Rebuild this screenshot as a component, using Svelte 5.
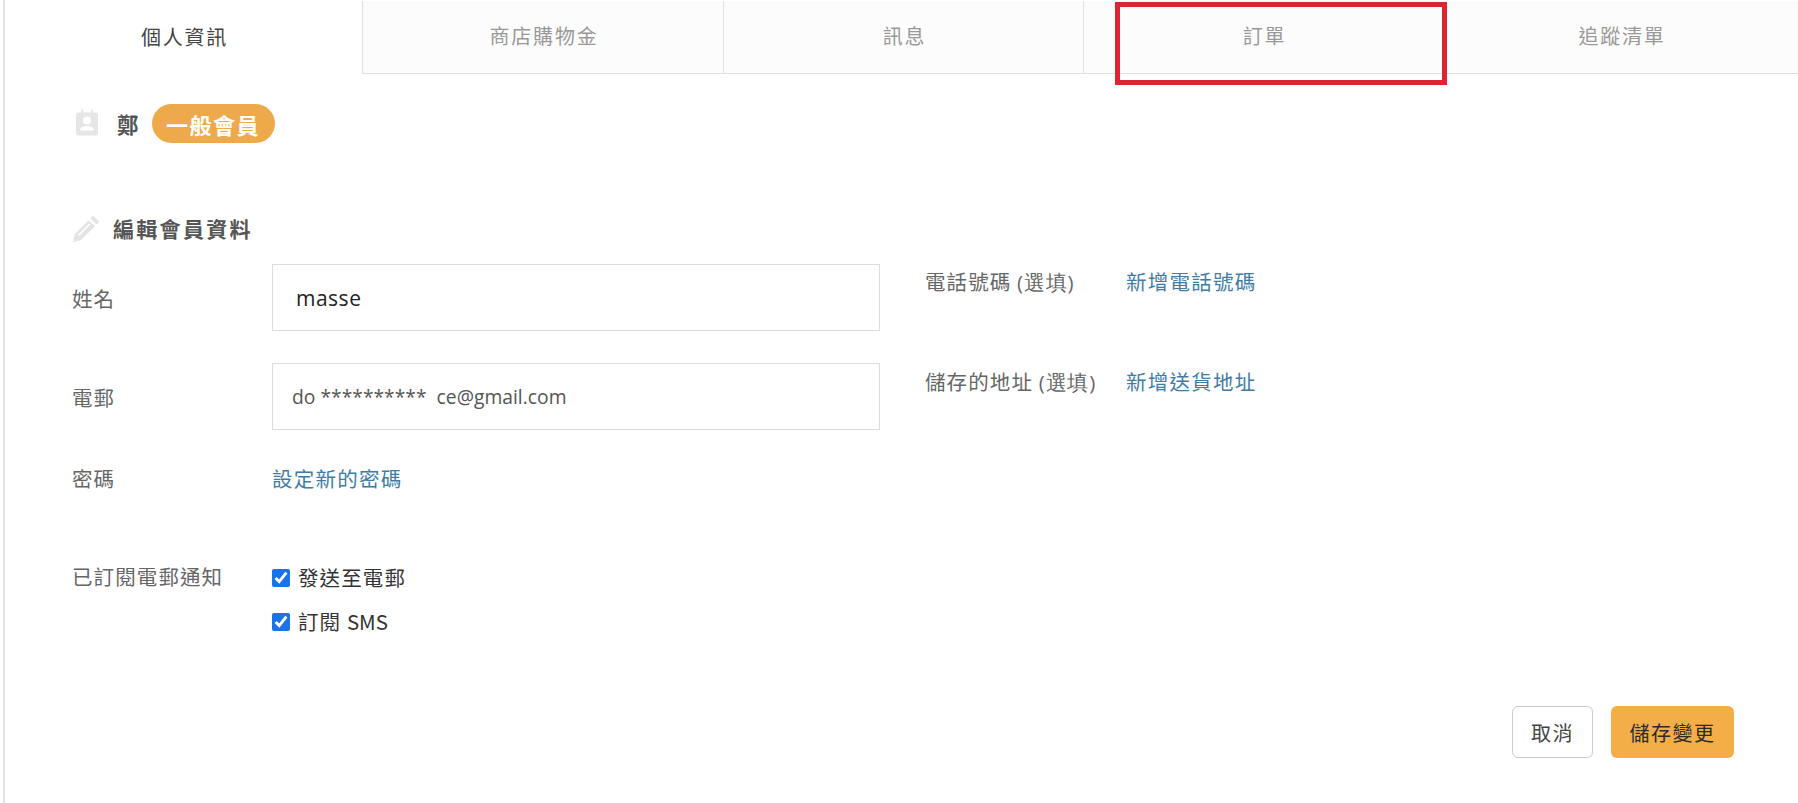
<script>
  const tabs = ['個人資訊', '商店購物金', '訊息', '訂單', '追蹤清單'];
</script>

<div class="page">
  <nav class="tabs">
    {#each tabs as t, i}
      <div class="tab" class:active={i === 0}>{t}</div>
    {/each}
  </nav>
  <div class="highlight"></div>

  <main class="content">
    <div class="member">
      <svg class="contact" viewBox="0 0 24 26" aria-hidden="true">
        <path fill="#e6e6e6" d="M3 3h3V0h2v3h8V0h2v3h3a2 2 0 0 1 2 2v19a2 2 0 0 1-2 2H3a2 2 0 0 1-2-2V5a2 2 0 0 1 2-2z"/>
        <circle fill="#fff" cx="12" cy="11" r="4"/>
        <path fill="#fff" d="M5 21c0-3 3-4.500 7-4.500s7 1.500 7 4.500z"/>
      </svg>
      <span class="name">鄭</span>
      <span class="badge">一般會員</span>
    </div>

    <h2 class="section-title">
      <svg class="pencil" viewBox="0 0 26 26" aria-hidden="true">
        <path fill="#e4e4e4" d="M19 1.500l5.500 5.500-2.500 2.500L16.500 4zM15 5.500L20.500 11 8 23.500 1 25l1.500-7z"/>
        <path fill="#fff" d="M15.500 8.500l1 1L6.500 19.500l-1-1z"/>
      </svg>
      編輯會員資料
    </h2>

    <div class="columns">
      <div class="col-left">
        <div class="row row-input">
          <span class="label">姓名</span>
          <input class="field field-name" value="masse" aria-label="姓名" />
        </div>
        <div class="row row-input">
          <span class="label">電郵</span>
          <input class="field field-mail" value="do **********  ce@gmail.com" aria-label="電郵" />
        </div>
        <div class="row row-pass">
          <span class="label">密碼</span>
          <a class="link" href="#pw">設定新的密碼</a>
        </div>
        <div class="row row-sub">
          <span class="label">已訂閱電郵通知</span>
          <div class="checks">
            <label class="check"><input type="checkbox" checked />發送至電郵</label>
            <label class="check"><input type="checkbox" checked /><span>訂閱 <span class="latin">SMS</span></span></label>
          </div>
        </div>
      </div>

      <div class="col-right">
        <div class="opt opt-phone">
          <span class="label">電話號碼 <span class="paren">(選填)</span></span>
          <a class="link" href="#phone">新增電話號碼</a>
        </div>
        <div class="opt">
          <span class="label">儲存的地址 <span class="paren">(選填)</span></span>
          <a class="link" href="#addr">新增送貨地址</a>
        </div>
      </div>
    </div>

    <div class="actions">
      <button class="btn cancel">取消</button>
      <button class="btn save">儲存變更</button>
    </div>
  </main>
</div>

<style>
  :global(body) {
    margin: 0;
    background: #fff;
  }
  .page {
    position: relative;
    height: 803px;
    overflow: hidden;
    box-sizing: border-box;
    border-left: 2px solid #e2e2e2;
    margin-left: 3px;
    width: 1795px;
    font-family: "Noto Sans CJK TC", "Noto Sans", sans-serif;
    color: #666;
  }
  .tabs {
    display: grid;
    grid-template-columns: 358px 360px 360px 360px 1fr;
    height: 74px;
    padding-top: 1px;
    box-sizing: border-box;
  }
  .tab {
    display: flex;
    align-items: center;
    justify-content: center;
    padding: 0 0 3px 2px;
    background: #fcfcfc;
    border-left: 1px solid #e0e0e0;
    border-bottom: 1px solid #e0e0e0;
    font-size: 20px;
    letter-spacing: 1.8px;
    color: #999;
  }
  .tab.active {
    background: #fff;
    border-left: 0;
    border-right: 1px solid #e0e0e0;
    border-bottom: 0;
    color: #444;
  }
  .tab.active + .tab {
    border-left: 0;
  }
  .highlight {
    position: absolute;
    left: 1110px;
    top: 2px;
    width: 332px;
    height: 83px;
    box-sizing: border-box;
    border: 5px solid #dc2530;
  }
  .content {
    padding: 30px 0 0 67px;
  }
  .member {
    display: flex;
    align-items: center;
    height: 39px;
  }
  .contact {
    width: 24px;
    height: 27px;
    margin: 0 0 2px 3px;
  }
  .name {
    margin-left: 18px;
    font-size: 21.5px;
    font-weight: 700;
    color: #555;
  }
  .badge {
    margin-left: 13px;
    width: 123px;
    height: 39px;
    display: flex;
    align-items: center;
    justify-content: center;
    border-radius: 20px;
    background: #eeaa4a;
    color: #fff;
    font-size: 22px;
    font-weight: 700;
    letter-spacing: 1.5px;
  }
  .section-title {
    display: flex;
    align-items: center;
    gap: 12px;
    height: 40px;
    margin: 65px 0 0 0;
    font-size: 21px;
    font-weight: 700;
    letter-spacing: 2.3px;
    color: #555;
  }
  .pencil {
    width: 29px;
    height: 29px;
    flex: none;
  }
  .columns {
    display: flex;
    margin-top: 16px;
  }
  .col-left {
    width: 853px;
  }
  .row {
    display: flex;
  }
  .label {
    display: block;
    font-size: 20.5px;
    letter-spacing: 1.1px;
    color: #666;
  }
  .row > .label {
    width: 200px;
    flex: none;
  }
  .row-input {
    height: 67px;
    align-items: center;
    margin-bottom: 32px;
  }
  .field {
    box-sizing: border-box;
    width: 608px;
    height: 67px;
    border: 1px solid #ddd;
    outline: 0;
    background: #fff;
    font-family: "Open Sans", sans-serif;
  }
  .field-name {
    padding: 0 23px;
    font-size: 21px;
    letter-spacing: .5px;
    color: #222;
  }
  .field-mail {
    padding: 0 19px;
    font-size: 19.3px;
    color: #555;
  }
  .row-pass {
    align-items: center;
    height: 40px;
    margin-top: -4px;
  }
  .link {
    font-size: 20.5px;
    letter-spacing: 1.25px;
    color: #3f7ca6;
    text-decoration: none;
  }
  .row-sub {
    margin-top: 63px;
  }
  .checks {
    display: flex;
    flex-direction: column;
    gap: 15px;
    padding-top: 1px;
  }
  .check {
    display: flex;
    align-items: center;
    height: 29px;
    font-size: 20.5px;
    letter-spacing: 1.1px;
    color: #333;
  }
  .check input {
    width: 18px;
    height: 18px;
    margin: 2px 8px 0 0;
    accent-color: #1a73e8;
  }
  .latin {
    letter-spacing: 0;
  }
  .col-right {
    padding-top: 2px;
  }
  .opt {
    display: flex;
    width: 400px;
    align-items: flex-start;
    height: 40px;
  }
  .opt-phone {
    margin-bottom: 60px;
  }
  .opt .label {
    width: 201px;
    flex: none;
    white-space: nowrap;
  }
  .paren {
    font-family: "Open Sans", sans-serif;
    letter-spacing: .8px;
  }
  .actions {
    display: flex;
    justify-content: flex-end;
    gap: 18px;
    position: absolute;
    right: 64px;
    top: 706px;
  }
  .btn {
    height: 52px;
    border-radius: 6px;
    font-family: inherit;
    font-size: 20px;
    letter-spacing: 1.5px;
    cursor: pointer;
  }
  .cancel {
    width: 81px;
    background: #fff;
    border: 1px solid #ccc;
    color: #444;
  }
  .save {
    width: 123px;
    background: #f4ae48;
    border: 0;
    color: #2b2b2b;
  }
</style>
